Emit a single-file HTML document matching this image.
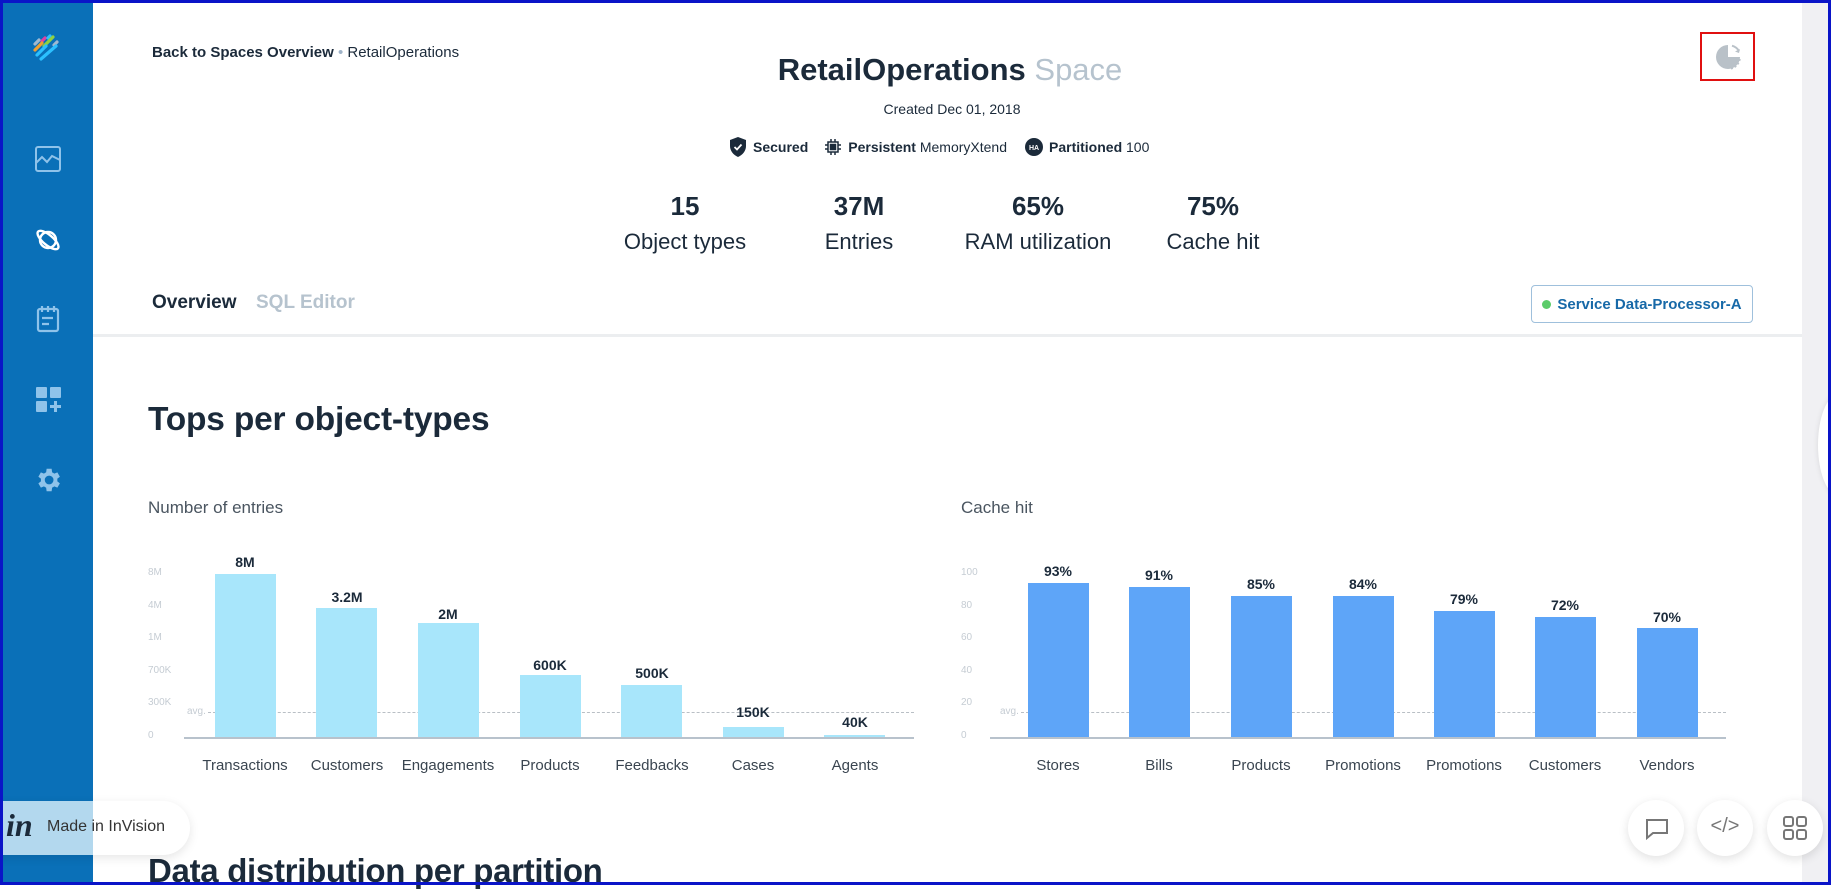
<!DOCTYPE html>
<html><head><meta charset="utf-8"><style>
*{margin:0;padding:0;box-sizing:border-box}
body{width:1831px;height:885px;overflow:hidden;background:#fff;font-family:"Liberation Sans",sans-serif;color:#1b2a3a;position:relative}
.frame{position:absolute;inset:0;border:3px solid #0a14c8;z-index:50;pointer-events:none}
.side{position:absolute;left:0;top:0;width:93px;height:885px;background:#0a70b8}
.rgray{position:absolute;left:1802px;top:0;width:29px;height:885px;background:#f0f0f3}
.abs{position:absolute;white-space:nowrap}
.c{transform:translateX(-50%)}
.ax{font-size:10px;color:#c5ccd3}
.xl{font-size:15px;color:#3a4550;transform:translateX(-50%)}
.bl{font-size:14px;font-weight:bold;color:#1b2a3a;transform:translateX(-50%)}
.circ{position:absolute;width:56px;height:56px;border-radius:50%;background:#fff;box-shadow:0 3px 10px rgba(0,0,0,.12)}
</style></head><body>
<div class="side"></div>
<div class="rgray"></div>
<div style="position:absolute;left:1818px;top:395px;width:40px;height:100px;border-radius:50%;background:#fff;box-shadow:0 0 6px rgba(0,0,0,.1)"></div>

<svg class="abs" style="left:32px;top:33px" width="32" height="32" viewBox="0 0 32 32" stroke-linecap="round" stroke-width="3.2">
<line x1="3" y1="11" x2="7" y2="7" stroke="#9fb8d0"/><line x1="10" y1="8" x2="13" y2="5" stroke="#e040a0"/><line x1="16" y1="5" x2="18" y2="3" stroke="#2bc0ff"/>
<line x1="3" y1="17" x2="10" y2="10" stroke="#f0a030"/><line x1="12" y1="13" x2="21" y2="4" stroke="#90d040"/><line x1="22" y1="12" x2="25" y2="9" stroke="#9fb8d0"/>
<line x1="5" y1="22" x2="14" y2="13" stroke="#2bc0ff"/><line x1="9" y1="26" x2="24" y2="13" stroke="#2bc0ff"/></svg>
<svg class="abs" style="left:35px;top:146px" width="26" height="26" viewBox="0 0 26 26" fill="none" stroke="#8fc3ea" stroke-width="2"><rect x="1" y="1" width="24" height="24" rx="2"/><path d="M1 17l6-6 5 5 5-6 8 4"/></svg>
<svg class="abs" style="left:34px;top:226px" width="28" height="28" viewBox="0 0 28 28" fill="none" stroke="#fff" stroke-width="2.4"><circle cx="14" cy="14" r="8"/><ellipse cx="14" cy="14" rx="13" ry="5" transform="rotate(40 14 14)"/></svg>
<svg class="abs" style="left:36px;top:305px" width="24" height="28" viewBox="0 0 24 28" fill="none" stroke="#8fc3ea" stroke-width="2.2"><rect x="2" y="4" width="20" height="22" rx="2"/><path d="M6 1v6M12 1v6M18 1v6M6 13h11M6 19h7"/></svg>
<svg class="abs" style="left:35px;top:386px" width="28" height="28" viewBox="0 0 28 28" fill="#8fc3ea"><rect x="1" y="1" width="11" height="11" rx="1"/><rect x="15" y="1" width="11" height="11" rx="1"/><rect x="1" y="15" width="11" height="11" rx="1"/><path d="M19 15h3v4h4v3h-4v4h-3v-4h-4v-3h4z"/></svg>
<svg class="abs" style="left:33px;top:465px" width="30" height="30" viewBox="0 0 24 24" fill="#8fc3ea"><path d="M19.4 13c.04-.33.1-.66.1-1s-.06-.67-.1-1l2.1-1.650-2-3.46-2.5 1a7.6 7.6 0 0 0-1.7-1L14.9 3h-4l-.4 2.9c-.6.25-1.200.6-1.700 1l-2.5-1-2 3.46L6.4 11c-.04.33-.1.66-.1 1s.06.67.1 1l-2.1 1.65 2 3.46 2.5-1c.5.4 1.1.75 1.7 1l.4 2.9h4l.4-2.9c.6-.25 1.2-.6 1.7-1l2.5 1 2-3.46zM12.9 15.5a3.5 3.5 0 1 1 0-7 3.5 3.5 0 0 1 0 7z"/></svg>

<div class="abs" style="left:152px;top:44px;font-size:15px;font-weight:bold;color:#1b2a3a">Back to Spaces Overview <span style="color:#9fb3c8;font-weight:normal">•</span> <span style="font-weight:normal">RetailOperations</span></div>
<div class="abs c" style="left:950px;top:52px;font-size:31px;font-weight:bold;color:#1b2a3a">RetailOperations <span style="font-weight:normal;color:#b6c3ce">Space</span></div>
<div class="abs c" style="left:952px;top:101px;font-size:14px;color:#1b2a3a">Created Dec 01, 2018</div>
<div class="abs" style="left:729px;top:137px;font-size:14px;display:flex;align-items:center;gap:6px">
<svg width="18" height="20" viewBox="0 0 18 20"><path d="M9 0L1 3v6c0 5 3.5 9 8 11 4.5-2 8-6 8-11V3z" fill="#1b2a3a"/><path d="M5.5 10l2.5 2.5 4.5-5" stroke="#fff" stroke-width="1.8" fill="none"/></svg>
<b>Secured</b>
<svg style="margin-left:10px" width="18" height="18" viewBox="0 0 18 18" fill="none" stroke="#1b2a3a" stroke-width="1.5"><rect x="4" y="4" width="10" height="10"/><rect x="6.5" y="6.5" width="5" height="5" fill="#1b2a3a"/><path d="M7 1v3M11 1v3M7 14v3M11 14v3M1 7h3M1 11h3M14 7h3M14 11h3"/></svg>
<span><b>Persistent</b> MemoryXtend</span>
<svg style="margin-left:12px" width="18" height="18" viewBox="0 0 18 18"><circle cx="9" cy="9" r="9" fill="#1b2a3a"/><text x="9" y="12" font-size="7" font-weight="bold" fill="#fff" text-anchor="middle" font-family="Liberation Sans">HA</text></svg>
<span><b>Partitioned</b> 100</span></div>

<div class="abs c" style="left:685px;top:191px;font-size:26px;font-weight:bold">15</div>
<div class="abs c" style="left:685px;top:229px;font-size:22px;color:#1b2a3a">Object types</div>
<div class="abs c" style="left:859px;top:191px;font-size:26px;font-weight:bold">37M</div>
<div class="abs c" style="left:859px;top:229px;font-size:22px">Entries</div>
<div class="abs c" style="left:1038px;top:191px;font-size:26px;font-weight:bold">65%</div>
<div class="abs c" style="left:1038px;top:229px;font-size:22px">RAM utilization</div>
<div class="abs c" style="left:1213px;top:191px;font-size:26px;font-weight:bold">75%</div>
<div class="abs c" style="left:1213px;top:229px;font-size:22px">Cache hit</div>

<div class="abs" style="left:152px;top:292px;font-size:19px;font-weight:bold">Overview</div>
<div class="abs" style="left:256px;top:292px;font-size:19px;font-weight:bold;color:#b6c3ce">SQL Editor</div>
<div class="abs" style="left:1531px;top:285px;width:222px;height:38px;border:1px solid #9fc0dc;border-radius:4px;font-size:15px;font-weight:bold;color:#1769a8;display:flex;align-items:center;justify-content:center;gap:6px"><span style="width:9px;height:9px;border-radius:50%;background:#5ccc6a;display:inline-block"></span>Service Data-Processor-A</div>
<div class="abs" style="left:93px;top:334px;width:1709px;height:3px;background:#eceef0"></div>

<div class="abs" style="left:1700px;top:32px;width:55px;height:49px;border:2px solid #e01010"></div>
<svg class="abs" style="left:1713px;top:42px" width="30" height="30" viewBox="0 0 30 30"><path d="M15 3a12 12 0 1 0 12 12H15z" fill="#b9c1c8"/><path d="M19 3.7A12 12 0 0 1 26 9" stroke="#b9c1c8" stroke-width="2" fill="none"/><path d="M27 7l-1 4-4-1.5" fill="#b9c1c8"/><path d="M27 17a12 12 0 0 1-10 10" stroke="#b9c1c8" stroke-width="1.5" stroke-dasharray="2 2" fill="none"/></svg>

<div class="abs" style="left:148px;top:401px;font-size:33.5px;font-weight:bold;letter-spacing:-0.2px">Tops per object-types</div>
<div class="abs" style="left:148px;top:498px;font-size:17px;color:#4a5560">Number of entries</div>
<div class="abs" style="left:961px;top:498px;font-size:17px;color:#4a5560">Cache hit</div>

<div class="abs ax" style="left:148px;top:567px">8M</div>
<div class="abs ax" style="left:148px;top:600px">4M</div>
<div class="abs ax" style="left:148px;top:632px">1M</div>
<div class="abs ax" style="left:148px;top:665px">700K</div>
<div class="abs ax" style="left:148px;top:697px">300K</div>
<div class="abs ax" style="left:148px;top:730px">0</div>
<div class="abs ax" style="left:187px;top:706px">avg.</div>
<div class="abs" style="left:184px;top:737px;width:730px;height:2px;background:#b8c2cc"></div>
<div class="abs" style="left:208px;top:712px;width:706px;border-top:1px dashed #b9bfc5"></div>

<div class="abs" style="left:215px;top:574px;width:61px;height:163px;background:#a8e6fb"></div>
<div class="abs" style="left:316px;top:608px;width:61px;height:129px;background:#a8e6fb"></div>
<div class="abs" style="left:418px;top:623px;width:61px;height:114px;background:#a8e6fb"></div>
<div class="abs" style="left:520px;top:675px;width:61px;height:62px;background:#a8e6fb"></div>
<div class="abs" style="left:621px;top:685px;width:61px;height:52px;background:#a8e6fb"></div>
<div class="abs" style="left:723px;top:727px;width:61px;height:10px;background:#a8e6fb"></div>
<div class="abs" style="left:824px;top:735px;width:61px;height:2px;background:#a8e6fb"></div>
<div class="abs bl" style="left:245px;top:554px">8M</div>
<div class="abs bl" style="left:347px;top:589px">3.2M</div>
<div class="abs bl" style="left:448px;top:606px">2M</div>
<div class="abs bl" style="left:550px;top:657px">600K</div>
<div class="abs bl" style="left:652px;top:665px">500K</div>
<div class="abs bl" style="left:753px;top:704px">150K</div>
<div class="abs bl" style="left:855px;top:714px">40K</div>
<div class="abs xl" style="left:245px;top:757px">Transactions</div>
<div class="abs xl" style="left:347px;top:757px">Customers</div>
<div class="abs xl" style="left:448px;top:757px">Engagements</div>
<div class="abs xl" style="left:550px;top:757px">Products</div>
<div class="abs xl" style="left:652px;top:757px">Feedbacks</div>
<div class="abs xl" style="left:753px;top:757px">Cases</div>
<div class="abs xl" style="left:855px;top:757px">Agents</div>

<div class="abs ax" style="left:961px;top:567px">100</div>
<div class="abs ax" style="left:961px;top:600px">80</div>
<div class="abs ax" style="left:961px;top:632px">60</div>
<div class="abs ax" style="left:961px;top:665px">40</div>
<div class="abs ax" style="left:961px;top:697px">20</div>
<div class="abs ax" style="left:961px;top:730px">0</div>
<div class="abs ax" style="left:1000px;top:706px">avg.</div>
<div class="abs" style="left:990px;top:737px;width:736px;height:2px;background:#b8c2cc"></div>
<div class="abs" style="left:1021px;top:712px;width:705px;border-top:1px dashed #b9bfc5"></div>

<div class="abs" style="left:1028px;top:583px;width:61px;height:154px;background:#5ea5f8"></div>
<div class="abs" style="left:1129px;top:587px;width:61px;height:150px;background:#5ea5f8"></div>
<div class="abs" style="left:1231px;top:596px;width:61px;height:141px;background:#5ea5f8"></div>
<div class="abs" style="left:1333px;top:596px;width:61px;height:141px;background:#5ea5f8"></div>
<div class="abs" style="left:1434px;top:611px;width:61px;height:126px;background:#5ea5f8"></div>
<div class="abs" style="left:1535px;top:617px;width:61px;height:120px;background:#5ea5f8"></div>
<div class="abs" style="left:1637px;top:628px;width:61px;height:109px;background:#5ea5f8"></div>
<div class="abs bl" style="left:1058px;top:563px">93%</div>
<div class="abs bl" style="left:1159px;top:567px">91%</div>
<div class="abs bl" style="left:1261px;top:576px">85%</div>
<div class="abs bl" style="left:1363px;top:576px">84%</div>
<div class="abs bl" style="left:1464px;top:591px">79%</div>
<div class="abs bl" style="left:1565px;top:597px">72%</div>
<div class="abs bl" style="left:1667px;top:609px">70%</div>
<div class="abs xl" style="left:1058px;top:757px">Stores</div>
<div class="abs xl" style="left:1159px;top:757px">Bills</div>
<div class="abs xl" style="left:1261px;top:757px">Products</div>
<div class="abs xl" style="left:1363px;top:757px">Promotions</div>
<div class="abs xl" style="left:1464px;top:757px">Promotions</div>
<div class="abs xl" style="left:1565px;top:757px">Customers</div>
<div class="abs xl" style="left:1667px;top:757px">Vendors</div>

<div class="abs" style="left:148px;top:852px;font-size:33px;font-weight:bold;letter-spacing:-0.3px">Data distribution per partition</div>

<div class="abs" style="left:-30px;top:801px;width:220px;height:54px;border-radius:27px;background:#fff;box-shadow:0 3px 10px rgba(0,0,0,.1)"></div>
<div class="abs" style="left:0;top:801px;width:93px;height:54px;background:#b3d8ee"></div>
<div class="abs" style="left:6px;top:807px;font-family:'Liberation Serif',serif;font-style:italic;font-weight:bold;font-size:32px;color:#1b2a3a">in</div>
<div class="abs" style="left:47px;top:818px;font-size:16px;color:#333">Made in InVision</div>

<div class="circ" style="left:1628px;top:800px"></div>
<div class="circ" style="left:1697px;top:800px"></div>
<div class="circ" style="left:1767px;top:800px"></div>
<svg class="abs" style="left:1645px;top:818px" width="24" height="22" viewBox="0 0 24 22" fill="none" stroke="#777" stroke-width="2"><path d="M2 2h20v13H8l-6 5V2z"/></svg>
<div class="abs c" style="left:1725px;top:815px;font-size:20px;color:#777">&lt;/&gt;</div>
<svg class="abs" style="left:1783px;top:816px" width="24" height="24" viewBox="0 0 24 24" fill="none" stroke="#777" stroke-width="2"><rect x="1" y="1" width="9" height="9" rx="2"/><rect x="14" y="1" width="9" height="9" rx="2"/><rect x="1" y="14" width="9" height="9" rx="2"/><rect x="14" y="14" width="9" height="9" rx="2"/></svg>

<div class="frame"></div>
</body></html>
